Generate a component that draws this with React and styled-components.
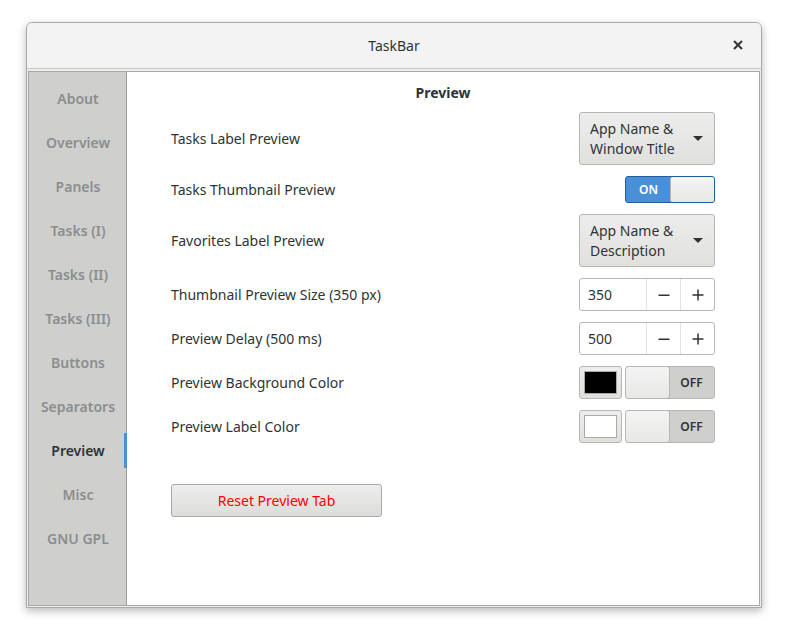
import React from 'react'
import styled, { createGlobalStyle } from 'styled-components'

const GlobalStyle = createGlobalStyle`
  html, body {
    margin: 0;
    padding: 0;
    background: #ffffff;
  }
  body {
    font-family: "Noto Sans", "DejaVu Sans", sans-serif;
    font-size: 14px;
    color: #2e3436;
  }
`

const Stage = styled.div`
  width: 788px;
  height: 637px;
  padding: 22px 26px 0 26px;
  box-sizing: border-box;
`

const Window = styled.div`
  width: 736px;
  height: 586px;
  box-sizing: border-box;
  border: 1px solid #a9a9a9;
  border-radius: 6px 6px 0 0;
  background: #ededed;
  box-shadow: 0 3px 9px rgba(0, 0, 0, 0.28);
  display: flex;
  flex-direction: column;
  overflow: hidden;
`

const TitleBar = styled.div`
  height: 46px;
  box-sizing: border-box;
  padding-bottom: 1px;
  flex-shrink: 0;
  background: #f3f3f3;
  border-bottom: 1px solid #c8c8c8;
  display: flex;
  align-items: center;
  justify-content: center;
  position: relative;
  font-size: 14px;
  color: #2e3436;
`

const CloseButton = styled.div`
  position: absolute;
  right: 16px;
  top: 15px;
  width: 14px;
  height: 14px;
  display: flex;
  align-items: center;
  justify-content: center;
`

const Body = styled.div`
  flex: 1;
  padding: 2px 1px 1px 1px;
  display: flex;
  min-height: 0;
`

const Frame = styled.div`
  flex: 1;
  border: 1px solid #a8a8a8;
  display: flex;
  background: #ffffff;
`

const Sidebar = styled.div`
  width: 97px;
  background: #cfcfcd;
  border-right: 1px solid #9c9c9a;
  padding-top: 4px;
  display: flex;
  flex-direction: column;
`

const SideItem = styled.div`
  height: 44px;
  display: flex;
  align-items: center;
  justify-content: center;
  font-weight: 600;
  font-size: 14px;
  color: ${(p) => (p.$active ? '#2e3436' : '#8b8e8f')};
  position: relative;
  margin-right: -1px;

  &::after {
    content: '';
    display: ${(p) => (p.$active ? 'block' : 'none')};
    position: absolute;
    right: 0;
    top: 5px;
    bottom: 4px;
    width: 3px;
    background: #4a90d9;
  }
`

const Content = styled.div`
  flex: 1;
  display: flex;
  flex-direction: column;
  padding: 9px 44px 0 44px;
`

const Heading = styled.div`
  text-align: center;
  font-weight: bold;
  font-size: 14px;
  height: 23px;
  line-height: 23px;
  margin-bottom: 8px;
`

const Rows = styled.div`
  display: flex;
  flex-direction: column;
  gap: 11px;
`

const Row = styled.div`
  display: flex;
  align-items: center;
  justify-content: space-between;
  min-height: 27px;
`

const Label = styled.div`
  font-size: 14px;
  color: #2e3436;
`

const Combo = styled.div`
  width: 136px;
  height: 53px;
  box-sizing: border-box;
  border: 1px solid #b6b6b3;
  border-radius: 3px;
  background: linear-gradient(#ededed, #e0e0dd);
  display: flex;
  align-items: center;
  justify-content: space-between;
  padding: 0 11px 0 10px;
  line-height: 20px;
  font-size: 14px;
`

const Arrow = styled.div`
  width: 0;
  height: 0;
  border-left: 5px solid transparent;
  border-right: 5px solid transparent;
  border-top: 5px solid #2e3436;
`

const Switch = styled.div`
  width: 90px;
  height: ${(p) => (p.$tall ? '33px' : '27px')};
  box-sizing: border-box;
  border-radius: 3px;
  border: 1px solid ${(p) => (p.$on ? '#215d9c' : '#b6b6b3')};
  background: ${(p) => (p.$on ? '#4a90d9' : '#cfcfcd')};
  display: flex;
  overflow: hidden;
`

const SwitchText = styled.div`
  flex: 1;
  display: flex;
  align-items: center;
  justify-content: center;
  font-size: 12px;
  font-weight: 600;
  color: ${(p) => (p.$on ? '#ffffff' : '#2e3436')};
`

const Knob = styled.div`
  width: 45px;
  box-sizing: border-box;
  background: linear-gradient(#f4f4f4, #e8e8e7);
  border: 1px solid #b6b6b3;
  border-radius: 3px;
  margin: -1px;
`

const Spin = styled.div`
  width: 136px;
  height: 33px;
  box-sizing: border-box;
  border: 1px solid #b6b6b3;
  border-radius: 3px;
  background: #ffffff;
  display: flex;
`

const SpinEntry = styled.div`
  flex: 1;
  display: flex;
  align-items: center;
  padding-left: 8px;
  font-size: 14px;
`

const SpinButton = styled.div`
  width: 33px;
  border-left: 1px solid #e3e3e1;
  display: flex;
  align-items: center;
  justify-content: center;
`

const ColorGroup = styled.div`
  display: flex;
  gap: 3px;
`

const ColorButton = styled.div`
  width: 43px;
  height: 33px;
  box-sizing: border-box;
  border: 1px solid #b6b6b3;
  border-radius: 3px;
  background: linear-gradient(#ededed, #e0e0dd);
  padding: 4px;
  display: flex;
`

const Swatch = styled.div`
  flex: 1;
  background: ${(p) => p.$color};
  border: 1px solid #a9a9a7;
`

const ResetButton = styled.div`
  width: 211px;
  height: 33px;
  box-sizing: border-box;
  margin-top: 41px;
  border: 1px solid #a9a9a7;
  border-radius: 3px;
  background: linear-gradient(#ededed, #dcdcda);
  color: #ff0000;
  font-size: 14px;
  display: flex;
  align-items: center;
  justify-content: center;
`

const Minus = () => (
  <svg width="12" height="12" viewBox="0 0 12 12">
    <rect x="0.5" y="5.5" width="11" height="1.5" fill="#2e3436" />
  </svg>
)

const Plus = () => (
  <svg width="12" height="12" viewBox="0 0 12 12">
    <rect x="0.5" y="5.25" width="11" height="1.5" fill="#2e3436" />
    <rect x="5.25" y="0.5" width="1.5" height="11" fill="#2e3436" />
  </svg>
)

const sideItems = [
  'About',
  'Overview',
  'Panels',
  'Tasks (I)',
  'Tasks (II)',
  'Tasks (III)',
  'Buttons',
  'Separators',
  'Preview',
  'Misc',
  'GNU GPL',
]

const SpinBox = ({ value }) => (
  <Spin>
    <SpinEntry>{value}</SpinEntry>
    <SpinButton>
      <Minus />
    </SpinButton>
    <SpinButton>
      <Plus />
    </SpinButton>
  </Spin>
)

const ColorToggle = ({ color }) => (
  <ColorGroup>
    <ColorButton>
      <Swatch $color={color} />
    </ColorButton>
    <Switch $tall>
      <Knob />
      <SwitchText>OFF</SwitchText>
    </Switch>
  </ColorGroup>
)

export default function App() {
  return (
    <>
      <GlobalStyle />
      <Stage>
        <Window>
          <TitleBar>
            TaskBar
            <CloseButton>
              <svg width="10" height="10" viewBox="0 0 10 10">
                <path d="M1 1 L9 9 M9 1 L1 9" stroke="#2e3436" strokeWidth="2" />
              </svg>
            </CloseButton>
          </TitleBar>
          <Body>
            <Frame>
              <Sidebar>
                {sideItems.map((item) => (
                  <SideItem key={item} $active={item === 'Preview'}>
                    {item}
                  </SideItem>
                ))}
              </Sidebar>
              <Content>
                <Heading>Preview</Heading>
                <Rows>
                  <Row>
                    <Label>Tasks Label Preview</Label>
                    <Combo>
                      <div>
                        App Name &amp;
                        <br />
                        Window Title
                      </div>
                      <Arrow />
                    </Combo>
                  </Row>
                  <Row>
                    <Label>Tasks Thumbnail Preview</Label>
                    <Switch $on>
                      <SwitchText $on>ON</SwitchText>
                      <Knob />
                    </Switch>
                  </Row>
                  <Row>
                    <Label>Favorites Label Preview</Label>
                    <Combo>
                      <div>
                        App Name &amp;
                        <br />
                        Description
                      </div>
                      <Arrow />
                    </Combo>
                  </Row>
                  <Row>
                    <Label>Thumbnail Preview Size (350 px)</Label>
                    <SpinBox value="350" />
                  </Row>
                  <Row>
                    <Label>Preview Delay (500 ms)</Label>
                    <SpinBox value="500" />
                  </Row>
                  <Row>
                    <Label>Preview Background Color</Label>
                    <ColorToggle color="#000000" />
                  </Row>
                  <Row>
                    <Label>Preview Label Color</Label>
                    <ColorToggle color="#ffffff" />
                  </Row>
                </Rows>
                <ResetButton>Reset Preview Tab</ResetButton>
              </Content>
            </Frame>
          </Body>
        </Window>
      </Stage>
    </>
  )
}
